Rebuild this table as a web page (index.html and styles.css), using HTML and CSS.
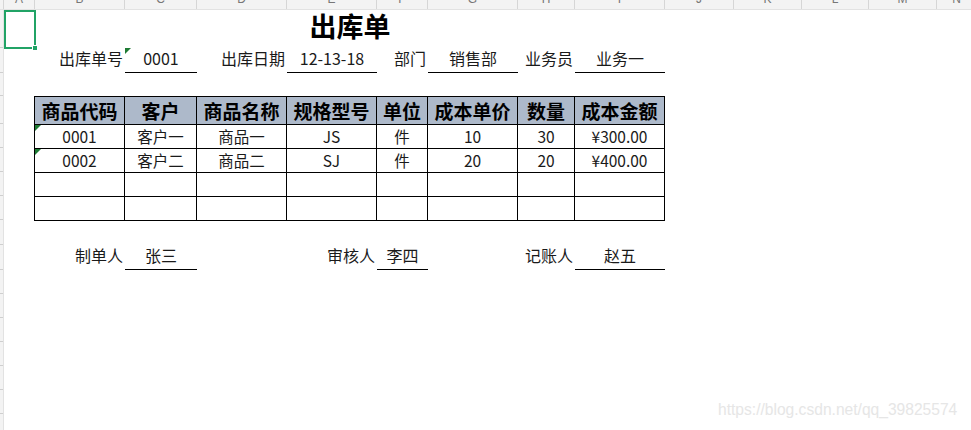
FILE: index.html
```html
<!DOCTYPE html>
<html lang="zh-CN">
<head>
<meta charset="utf-8">
<title>出库单</title>
<link rel="stylesheet" href="styles.css">
</head>
<body>
<div class="app">
  <div class="colhead">
    <div class="corner"></div>
    <div class="ch w-a">A</div>
    <div class="ch w-b">B</div>
    <div class="ch w-c">C</div>
    <div class="ch w-d">D</div>
    <div class="ch w-e">E</div>
    <div class="ch w-f">F</div>
    <div class="ch w-g">G</div>
    <div class="ch w-h">H</div>
    <div class="ch w-i">I</div>
    <div class="ch w-j">J</div>
    <div class="ch w-k">K</div>
    <div class="ch w-l">L</div>
    <div class="ch w-m">M</div>
    <div class="ch w-n">N</div>
  </div>
  <div class="main">
    <div class="rowhead">
      <div class="rh h38"></div>
      <div class="rh h25"></div>
      <div class="rh h23"></div>
      <div class="rh h28"></div>
      <div class="rh h24"></div>
      <div class="rh h24"></div>
      <div class="rh h24"></div>
      <div class="rh h24"></div>
      <div class="rh h25"></div>
      <div class="rh h25"></div>
      <div class="rh h24"></div>
      <div class="rh h24"></div>
      <div class="rh h24"></div>
      <div class="rh h24"></div>
      <div class="rh h24"></div>
      <div class="rh h24"></div>
      <div class="rh h24"></div>
    </div>
    <div class="sheet">
      <div class="selected r1 c1"><span class="handle"></span></div>
      <div class="title r1 span-bi">出库单</div>

      <div class="lbl r2 c2">出库单号</div>
      <div class="val r2 c3"><span class="flag"></span>0001</div>
      <div class="lbl r2 c4">出库日期</div>
      <div class="val r2 c5">12-13-18</div>
      <div class="lbl r2 c6">部门</div>
      <div class="val r2 c7">销售部</div>
      <div class="lbl r2 c8">业务员</div>
      <div class="val r2 c9">业务一</div>

      <table class="grid r4 span-bi">
        <colgroup>
          <col class="w-b"><col class="w-c"><col class="w-d"><col class="w-e">
          <col class="w-f"><col class="w-g"><col class="w-h"><col class="w-i">
        </colgroup>
        <thead>
          <tr>
            <th>商品代码</th><th>客户</th><th>商品名称</th><th>规格型号</th>
            <th>单位</th><th>成本单价</th><th>数量</th><th>成本金额</th>
          </tr>
        </thead>
        <tbody>
          <tr>
            <td class="flagged"><span class="flag"></span>0001</td><td>客户一</td><td>商品一</td><td>JS</td>
            <td>件</td><td>10</td><td>30</td><td>¥300.00</td>
          </tr>
          <tr>
            <td class="flagged"><span class="flag"></span>0002</td><td>客户二</td><td>商品二</td><td>SJ</td>
            <td>件</td><td>20</td><td>20</td><td>¥400.00</td>
          </tr>
          <tr>
            <td></td><td></td><td></td><td></td><td></td><td></td><td></td><td></td>
          </tr>
          <tr>
            <td></td><td></td><td></td><td></td><td></td><td></td><td></td><td></td>
          </tr>
        </tbody>
      </table>

      <div class="lbl r6 c2">制单人</div>
      <div class="val r6 c3">张三</div>
      <div class="lbl r6 c5">审核人</div>
      <div class="val r6 c6">李四</div>
      <div class="lbl r6 c8">记账人</div>
      <div class="val r6 c9">赵五</div>
    </div>
  </div>
  <div class="watermark">https://blog.csdn.net/qq_39825574</div>
</div>
</body>
</html>
```
FILE: styles.css
```css
* { box-sizing: border-box; }
html, body { margin: 0; padding: 0; }
body {
  width: 971px;
  height: 430px;
  overflow: hidden;
  background: #fff;
  font-family: "Noto Sans CJK SC", "Liberation Sans", sans-serif;
  color: #111;
}
.app { position: relative; width: 971px; height: 430px; overflow: hidden; }

/* column header strip */
.colhead {
  display: flex;
  height: 10px;
  background: #f3f3f3;
  border-bottom: 1px solid #e2e2e2;
  overflow: hidden;
}
.corner { width: 4px; flex: none; border-right: 1px solid #d6d6d6; }
.ch {
  flex: none;
  border-right: 1px solid #d6d6d6;
  font-family: "Liberation Sans", sans-serif;
  font-size: 12px;
  line-height: 12px;
  color: #777;
  text-align: center;
  margin-top: -7px;
  height: 17px;
}
.w-a { width: 31px; }
.w-b { width: 90px; }
.w-c { width: 72px; }
.w-d { width: 90px; }
.w-e { width: 90px; }
.w-f { width: 51px; }
.w-g { width: 90px; }
.w-h { width: 57px; }
.w-i { width: 90px; }
.w-j { width: 69px; }
.w-k { width: 68px; }
.w-l { width: 67px; }
.w-m { width: 68px; }
.w-n { width: 40px; }

.main { display: flex; }
.rowhead {
  width: 4px;
  flex: none;
  background: #f3f3f3;
  border-right: 1px solid #e2e2e2;
}
.rh { border-bottom: 1px solid #cfcfcf; }
.h38 { height: 38px; }
.h25 { height: 25px; }
.h23 { height: 23px; }
.h28 { height: 28px; }
.h24 { height: 24px; }

.sheet {
  display: grid;
  grid-template-columns: 31px 90px 72px 90px 90px 51px 90px 57px 90px 69px 68px 67px 68px 1fr;
  grid-template-rows: 38px 25px 23px 124px 25px 25px;
  width: 967px;
}
.r1 { grid-row: 1; }
.r2 { grid-row: 2; }
.r4 { grid-row: 4; }
.r6 { grid-row: 6; }
.c1 { grid-column: 1; }
.c2 { grid-column: 2; }
.c3 { grid-column: 3; }
.c4 { grid-column: 4; }
.c5 { grid-column: 5; }
.c6 { grid-column: 6; }
.c7 { grid-column: 7; }
.c8 { grid-column: 8; }
.c9 { grid-column: 9; }
.span-bi { grid-column: 2 / 10; }

.selected {
  position: relative;
  border: 2px solid #21a366;
  margin: 0 -1px -1px 0;
}
.handle {
  position: absolute;
  right: -4px;
  bottom: -4px;
  width: 6px;
  height: 6px;
  background: #21a366;
  border: 1px solid #fff;
}

.title {
  font-size: 27px;
  font-weight: bold;
  text-align: center;
  line-height: 32px;
  color: #000;
}

.lbl, .val {
  font-size: 16px;
  line-height: 20px;
  display: flex;
  align-items: flex-end;
  padding-bottom: 5px;
  white-space: nowrap;
  color: #1a1a1a;
}
.lbl { justify-content: flex-end; padding-right: 2px; }
.val {
  position: relative;
  justify-content: center;
  border-bottom: 1px solid #000;
  padding-bottom: 4px;
}

.flag {
  position: absolute;
  left: 0;
  top: 0;
  width: 0;
  height: 0;
  border-top: 6px solid #1e7b34;
  border-right: 6px solid transparent;
}

.grid {
  border-collapse: collapse;
  table-layout: fixed;
  width: 631px;
  margin-left: -1px;
  align-self: start;
}
.grid th, .grid td {
  border: 1px solid #000;
  text-align: center;
  padding: 0;
  white-space: nowrap;
}
.grid th {
  background: #adb9ca;
  font-size: 19px;
  font-weight: bold;
  height: 28px;
  line-height: 24px;
  color: #000;
}
.grid td {
  font-size: 15.5px;
  height: 24px;
  line-height: 20px;
  padding-bottom: 2px;
  color: #1a1a1a;
}
.grid td.flagged { position: relative; }

.watermark {
  position: absolute;
  left: 718px;
  top: 401px;
  font-family: "Liberation Sans", sans-serif;
  font-size: 15.6px;
  color: #e6e6e6;
  white-space: nowrap;
}
```
